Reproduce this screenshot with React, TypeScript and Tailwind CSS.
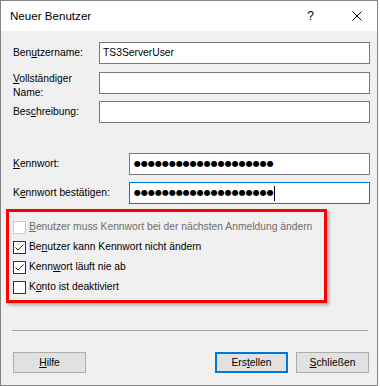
import React from "react";

function Field({ label, width, active, value, password }: { label: React.ReactNode; width: string; active?: boolean; value?: string; password?: boolean }) {
  return (
    <div className="flex items-start h-[22px]">
      <div className={`${width} shrink-0 h-[22px] leading-[14px] pt-[4px]`}>{label}</div>
      <div
        className={`flex-1 h-[22px] bg-white flex items-center pl-[3px] ${
          active ? "border border-[#0078d7]" : "border border-[#7a7a7a]"
        }`}
      >
        {password ? (
          <>
            <span className="font-['DejaVu_Sans',sans-serif] text-[8px] tracking-[0px] leading-none pl-[1px]">
              ●●●●●●●●●●●●●●●●●●●●
            </span>
            {active && <span className="w-px h-[15px] bg-black" />}
          </>
        ) : (
          <span>{value}</span>
        )}
      </div>
    </div>
  );
}

function Check({ checked, disabled, children }: { checked?: boolean; disabled?: boolean; children: React.ReactNode }) {
  return (
    <div className="h-[20px] flex items-center">
      <span
        className={`w-[13px] h-[13px] bg-white border flex items-center justify-center ${
          disabled ? "border-[#cccccc]" : "border-[#333333]"
        }`}
      >
        {checked && (
          <svg width="11" height="11" viewBox="0 0 11 11">
            <polyline points="1.5,5.5 4,8 9.5,2.5" fill="none" stroke="#333333" strokeWidth="1" />
          </svg>
        )}
      </span>
      <span className={`ml-[3px] ${disabled ? "text-[#6d6d6d]" : "text-black"}`}>{children}</span>
    </div>
  );
}

export default function App() {
  return (
    <div className="w-[380px] h-[386px] bg-white font-['Liberation_Sans',Arial,sans-serif] text-[10.3px] text-black">
      <div className="w-[378px] h-[386px] border border-[#838383] flex flex-col">
        {/* Title bar */}
        <div className="h-[30px] bg-white flex items-center pl-[9px] pr-[15px]">
          <span className="text-[11.6px] flex-1">Neuer Benutzer</span>
          <span className="text-[12px] mr-[38px]">?</span>
          <svg width="10" height="10" viewBox="0 0 10 10">
            <path d="M0.5 0.5 L9.5 9.5 M9.5 0.5 L0.5 9.5" stroke="#000" strokeWidth="1" />
          </svg>
        </div>

        {/* Body */}
        <div className="flex-1 bg-[#f0f0f0] flex flex-col pl-[5px] pr-[7px]">
          <div className="pl-[7px] pt-[11px] flex flex-col">
            <Field
              width="w-[86px]"
              value="TS3ServerUser"
              label={
                <>
                  Ben<span className="underline">u</span>tzername:
                </>
              }
            />
            <div className="mt-[8px]">
              <Field
                width="w-[86px]"
                label={
                  <span className="block -mt-[4px]">
                    <span className="underline">V</span>ollständiger
                    <br />
                    Name:
                  </span>
                }
              />
            </div>
            <div className="mt-[7px]">
              <Field
                width="w-[86px]"
                label={
                  <>
                    Bes<span className="underline">c</span>hreibung:
                  </>
                }
              />
            </div>
            <div className="mt-[30px]">
              <Field
                width="w-[116px]"
                password
                label={
                  <>
                    <span className="underline">K</span>ennwort:
                  </>
                }
              />
            </div>
            <div className="mt-[7px]">
              <Field
                width="w-[116px]"
                password
                active
                label={
                  <>
                    K<span className="underline">e</span>nnwort bestätigen:
                  </>
                }
              />
            </div>
          </div>

          {/* Options */}
          <div className="mt-[5px] w-[321px] border-[3px] border-[#ff0000] shadow-[2px_2px_3px_rgba(0,0,0,0.3)] pl-[4px] pt-[5px] pb-[3px] flex flex-col">
            <Check disabled>
              <span className="underline">B</span>enutzer muss Kennwort bei der nächsten Anmeldung ändern
            </Check>
            <Check checked>
              Be<span className="underline">n</span>utzer kann Kennwort nicht ändern
            </Check>
            <Check checked>
              Kenn<span className="underline">w</span>ort läuft nie ab
            </Check>
            <Check>
              K<span className="underline">o</span>nto ist deaktiviert
            </Check>
          </div>

          <div className="mt-[27px] ml-[6px] w-[356px] h-px bg-[#a0a0a0]" />

          {/* Buttons */}
          <div className="mt-[21px] flex items-center pl-[7px] pr-[1px]">
            <button className="w-[73px] h-[21px] bg-[#e1e1e1] border border-[#adadad]">
              <span className="underline">H</span>ilfe
            </button>
            <div className="flex-1" />
            <button className="w-[73px] h-[21px] bg-[#e1e1e1] border-2 border-[#0078d7]">
              Ers<span className="underline">t</span>ellen
            </button>
            <button className="ml-[8px] w-[73px] h-[21px] bg-[#e1e1e1] border border-[#adadad]">
              <span className="underline">S</span>chließen
            </button>
          </div>
        </div>
      </div>
    </div>
  );
}
